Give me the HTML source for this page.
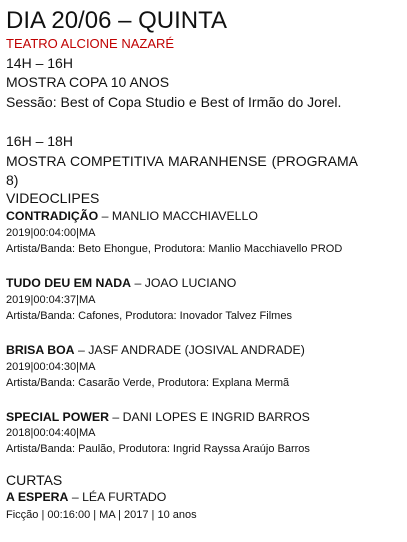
<!DOCTYPE html>
<html><head><meta charset="utf-8"><style>
body{margin:0;width:407px;height:542px;background:#fff;position:relative;overflow:hidden;font-family:"Liberation Sans",Arial,sans-serif;color:#111}
div{position:absolute;left:6px;white-space:nowrap;line-height:1}
.t{font-size:24px;top:9px}
.m{font-size:14px}
.s{font-size:11px}
.b{font-size:12.3px}
.r{color:#c00000;font-size:13px}
</style></head><body>
<div class="t">DIA 20/06 – QUINTA</div>
<div class="r" style="top:37px">TEATRO ALCIONE NAZARÉ</div>
<div class="m" style="top:56px">14H – 16H</div>
<div class="m" style="top:75px">MOSTRA COPA 10 ANOS</div>
<div class="m" style="top:95px">Sessão: Best of Copa Studio e Best of Irmão do Jorel.</div>
<div class="m" style="top:134px">16H – 18H</div>
<div class="m" style="top:154px;word-spacing:1px">MOSTRA COMPETITIVA MARANHENSE (PROGRAMA</div>
<div class="m" style="top:173px">8)</div>
<div class="m" style="top:191px">VIDEOCLIPES</div>
<div class="b" style="top:210px"><b>CONTRADIÇÃO</b> – MANLIO MACCHIAVELLO</div>
<div class="s" style="top:228px">2019|00:04:00|MA</div>
<div class="s" style="top:244px">Artista/Banda: Beto Ehongue, Produtora: Manlio Macchiavello PROD</div>
<div class="b" style="top:277px"><b>TUDO DEU EM NADA</b> – JOAO LUCIANO</div>
<div class="s" style="top:295px">2019|00:04:37|MA</div>
<div class="s" style="top:311px">Artista/Banda: Cafones, Produtora: Inovador Talvez Filmes</div>
<div class="b" style="top:344px"><b>BRISA BOA</b> – JASF ANDRADE (JOSIVAL ANDRADE)</div>
<div class="s" style="top:362px">2019|00:04:30|MA</div>
<div class="s" style="top:378px">Artista/Banda: Casarão Verde, Produtora: Explana Mermã</div>
<div class="b" style="top:411px"><b>SPECIAL POWER</b> – DANI LOPES E INGRID BARROS</div>
<div class="s" style="top:428px">2018|00:04:40|MA</div>
<div class="s" style="top:444px">Artista/Banda: Paulão, Produtora: Ingrid Rayssa Araújo Barros</div>
<div class="m" style="top:473px">CURTAS</div>
<div class="b" style="top:491px"><b>A ESPERA</b> – LÉA FURTADO</div>
<div class="s" style="top:510px">Ficção | 00:16:00 | MA | 2017 | 10 anos</div>
</body></html>
